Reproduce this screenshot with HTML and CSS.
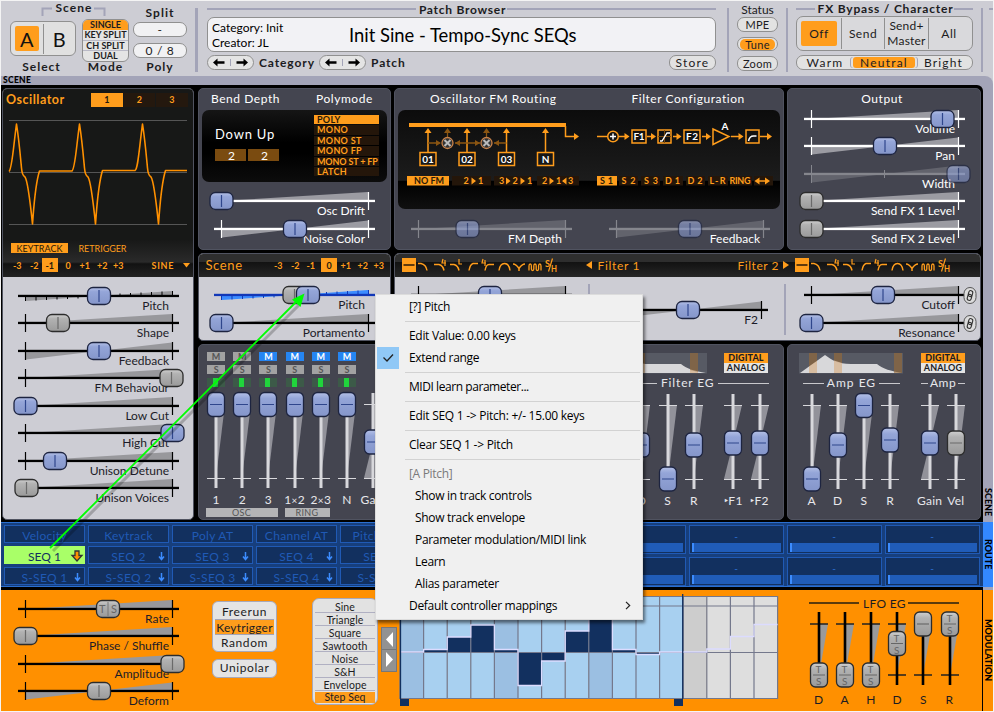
FILE: index.html
```html
<!DOCTYPE html>
<html lang="en">
<head>
<meta charset="utf-8">
<title>Synth</title>
<link rel="stylesheet" href="styles.css">
</head>
<body>
<div class="app">
  <header class="top">
    <div class="scene-main">
      <svg class="scene-title" width="119" height="17"><path d="M32.500 15V7.500H42M84 7.500H94.500V15" class="bracket"/><text x="45.500" y="11" textLength="36" class="cap">Scene</text></svg>
      <div class="row">
        <div class="select-col">
          <div class="ab"><span class="ab-btn on">A</span><i></i><span class="ab-btn">B</span></div>
          <div class="hlabel">Select</div>
        </div>
        <div class="mode-col">
          <div class="mode"><span class="on">SINGLE</span><span>KEY SPLIT</span><span>CH SPLIT</span><span>DUAL</span></div>
          <div class="hlabel">Mode</div>
        </div>
      </div>
    </div>
    <div class="split-col">
      <div class="hlabel">Split</div>
      <div class="pill light">-</div>
      <div class="pill light poly">0 / 8</div>
      <div class="hlabel">Poly</div>
    </div>
    <div class="vbar"></div>
    <div class="patch">
      <div class="ruled"><span>Patch Browser</span></div>
      <div class="patch-box">
        <div class="patch-meta">Category: Init<br>Creator: JL</div>
        <div class="patch-name">Init Sine - Tempo-Sync SEQs</div>
      </div>
      <div class="patch-nav">
        <svg class="nav" width="47" height="15" data-nav></svg><span class="cat">Category</span>
        <svg class="nav" width="47" height="15" data-nav></svg><span class="pat">Patch</span>
        <div class="pill store">Store</div>
      </div>
    </div>
    <div class="vbar v2"></div>
    <div class="status">
      <div class="stitle">Status</div>
      <div class="pill">MPE</div>
      <div class="pill tune"><span>Tune</span></div>
      <div class="pill">Zoom</div>
    </div>
    <div class="vbar v3"></div>
    <div class="fx">
      <div class="ruled"><span>FX Bypass / Character</span></div>
      <div class="fx-box"><span class="off"><b>Off</b></span><span>Send</span><span>Send+<br>Master</span><span>All</span></div>
      <div class="pill char"><span>Warm</span><span class="on">Neutral</span><span>Bright</span></div>
    </div>
    <div class="vbar v4"></div>
    <div class="stub"></div>
  </header>

  <div class="strip">SCENE</div>

  <div class="lower">
    <div class="work">
      <main class="main">
        <section class="panel osc">
          <div class="osc-dark">
            <div class="osc-head"><span class="osc-title">Oscillator</span><div class="tabs"><span class="on">1</span><span>2</span><span>3</span></div></div>
            <svg class="wave" width="178" height="107" viewBox="9 119 178 107">
              <path d="M9 120.500H187M9 172.500H187M9 224.500H187" stroke="#555" fill="none"/>
              <path class="wl" d="M9 171.500C12 169 13 150 16.500 124C19 140 20 152 21.500 168C22 174 23 176 25 177C28 181 30 200 32.500 224C34 205 35 185 39.500 171H72C75 169 76 150 79.500 124C82 140 83 152 84.500 168C85 174 86 176 88 177C91 181 93 200 95.500 224C97 205 98 185 102.500 170.500H135C138 169 139 150 142.500 124C145 140 146 152 147.500 168C148 174 149 176 151 177C154 181 156 200 158.500 224C160 205 161 185 165.500 170.500H187"/>
            </svg>
            <svg width="190" height="38" viewBox="3 240 190 38" class="disp">
              <rect x="11" y="243" width="57" height="10" class="or"/>
              <text x="16.500" y="251.500" textLength="46" class="t9 dk">KEYTRACK</text><text x="78.500" y="251.500" textLength="48" class="t9">RETRIGGER</text>
              <rect x="42" y="258" width="16" height="14" class="or"/>
              <g class="t9 b"><text x="13" y="268.500">-3</text><text x="30" y="268.500">-2</text><text x="45.500" y="268.500" class="dk">-1</text><text x="65.500" y="268.500">0</text><text x="79.500" y="268.500">+1</text><text x="97" y="268.500">+2</text><text x="113" y="268.500">+3</text><text x="151.500" y="268.500" textLength="22">SINE</text></g>
              <path d="M183 263h7l-3.500 4.500z" class="or"/>
            </svg>
          </div>
          <div class="sliders oscs">
            <div data-hs="73.500" data-type="step" data-label="Pitch"></div>
            <div data-hs="32.500" data-gray="1" data-label="Shape"></div>
            <div data-hs="73.500" data-type="bi" data-label="Feedback"></div>
            <div data-hs="146" data-gray="1" data-label="FM Behaviour"></div>
            <div data-hs="0" data-label="Low Cut"></div>
            <div data-hs="147" data-label="High Cut"></div>
            <div data-hs="29.500" data-label="Unison Detune"></div>
            <div data-hs="1" data-gray="1" data-label="Unison Voices"></div>
          </div>
        </section>

        <section class="panel slate bend">
          <div class="titles"><span>Bend Depth</span><span class="pm">Polymode</span></div>
          <div class="screen bend-screen">
            <div class="bend-l"><div class="du">Down Up</div><div class="nums"><span>2</span><span>2</span></div></div>
            <div class="plist"><span class="on">POLY</span><span>MONO</span><span>MONO ST</span><span>MONO FP</span><span class="wide">MONO ST + FP</span><span>LATCH</span></div>
          </div>
          <div class="sliders white two"><div data-hs="0" data-label="Osc Drift"></div><div data-hs="73.500" data-type="bi" data-label="Noise Color"></div></div>
        </section>

        <section class="panel slate routing">
          <div class="titles"><span>Oscillator FM Routing</span><span class="fc">Filter Configuration</span></div>
          <div class="screen route-screen">
            <svg width="382" height="99" viewBox="398 110 382 99" class="disp" id="routing"></svg>
          </div>
          <div class="sliders white dim pair"><div data-hs="49" data-label="FM Depth"></div><div data-hs="73.500" data-type="bi" data-label="Feedback"></div></div>
        </section>

        <section class="panel slate output">
          <div class="titles"><span>Output</span></div>
          <div class="sliders white">
            <div data-hs="131" data-label="Volume"></div>
            <div data-hs="73.500" data-type="bi" data-label="Pan"></div>
            <div data-hs="147" data-type="bi" data-mid="1" data-label="Width" class="dimmed"></div>
            <div data-hs="0" data-gray="1" data-label="Send FX 1 Level"></div>
            <div data-hs="0" data-gray="1" data-label="Send FX 2 Level"></div>
          </div>
        </section>

        <section class="panel lightp scenep">
          <svg width="191" height="23" viewBox="199 254 191 23" class="disp hd">
            <text x="205.500" y="270" textLength="36.500" class="t13">Scene</text>
            <rect x="321" y="258" width="16" height="14" class="or"/>
            <g class="t9 b"><text x="274" y="268.500">-3</text><text x="291" y="268.500">-2</text><text x="306.500" y="268.500">-1</text><text x="326.500" y="268.500" class="dk">0</text><text x="340.500" y="268.500">+1</text><text x="357.500" y="268.500">+2</text><text x="373.500" y="268.500">+3</text></g>
          </svg>
          <div class="sliders"><div data-hs="86.500" data-type="blue" data-label="Pitch"></div><div data-hs="0" data-label="Portamento"></div></div>
        </section>

        <section class="panel lightp filters">
          <svg width="585" height="23" viewBox="395 254 585 23" class="disp hd" id="filterhead"></svg>
          <div class="filter-row">
            <div class="sliders f1"><div data-hs="71.500" data-label="Cutoff"></div><div data-hs="0" data-label="Resonance"></div></div>
            <div class="fdiv"></div>
            <div class="sliders f2"><div data-hs="73.500" data-type="bi" data-label="F2"></div></div>
            <div class="fdiv d2"></div>
            <div class="sliders f3"><div data-hs="71.500" data-label="Cutoff"></div><div data-hs="0" data-label="Resonance"></div></div>
            <div class="links"><svg width="14" height="18" data-link></svg><svg width="14" height="18" data-link></svg></div>
          </div>
        </section>

        <section class="panel slate mixer">
          <div class="mix-row" id="mixer"></div>
          <div class="brackets"><span class="oscb">OSC</span><span class="ringb">RING</span></div>
        </section>

        <section class="panel slate egf">
          <div class="eg-top"><svg width="104" height="21" data-eg="f"></svg><div class="da"><b>DIGITAL</b><span>ANALOG</span></div></div>
          <div class="eg-titles"><div class="ruledw"><span>Filter EG</span></div></div>
          <div class="vrow">
            <div data-vs="478" data-label="A"></div><div data-vs="444" data-label="D"></div><div data-vs="478" data-label="S"></div><div data-vs="444" data-label="R"></div>
            <div class="gapv" data-vs="442" data-type="bi" data-label="‣F1"></div><div data-vs="442" data-type="bi" data-label="‣F2"></div>
          </div>
        </section>

        <section class="panel slate ega">
          <div class="eg-top"><svg width="104" height="21" data-eg="a"></svg><div class="da"><b>DIGITAL</b><span>ANALOG</span></div></div>
          <div class="eg-titles"><div class="ruledw"><span>Amp EG</span></div><div class="ruledw amp"><span>Amp</span></div></div>
          <div class="vrow">
            <div data-vs="478" data-label="A"></div><div data-vs="444" data-label="D"></div><div data-vs="404.500" data-label="S"></div><div data-vs="439" data-label="R"></div>
            <div class="gapv" data-vs="442" data-type="bi" data-label="Gain"></div><div data-vs="442" data-gray="1" data-label="Vel"></div>
          </div>
        </section>
      </main>

      <section class="route">
        <div class="sources" id="sources"></div>
        <div class="macros" id="macros"></div>
      </section>

      <section class="lfo">
        <div class="sliders"><div data-hs="82.500" data-gray="1" data-ts="1" data-label="Rate"></div><div data-hs="0" data-gray="1" data-label="Phase / Shuffle"></div><div data-hs="147" data-gray="1" data-label="Amplitude"></div><div data-hs="73.500" data-type="bi" data-gray="1" data-label="Deform"></div></div>
        <div class="trig">
          <div class="btns"><span>Freerun</span><span class="on">Keytrigger</span><span>Random</span></div>
          <div class="btns uni"><span>Unipolar</span></div>
        </div>
        <div class="shapes"><span>Sine</span><span>Triangle</span><span>Square</span><span>Sawtooth</span><span>Noise</span><span>S&amp;H</span><span>Envelope</span><span class="on">Step Seq</span></div>
        <svg class="shift" width="16" height="45"><rect width="16" height="45" fill="#777"/><rect x="1" y="1" width="14" height="43" fill="#929292"/><path d="M1 22.500h14" stroke="#777"/><path d="M12 5v15L5 12.500zM5 25v15l7-7.500z" fill="#fff"/></svg>
        <svg class="stepseq" width="380" height="114" viewBox="399 593 380 114" id="seq"></svg>
        <div class="lfoeg">
          <div class="ruledk"><span>LFO EG</span></div>
          <div class="krow">
            <div data-ks="675" data-label="D"></div><div data-ks="675" data-label="A"></div><div data-ks="675" data-label="H"></div><div data-ks="643.500" data-label="D"></div><div data-ks="624" data-plain="1" data-label="S"></div><div data-ks="624" data-label="R"></div>
          </div>
        </div>
      </section>
    </div>
    <aside class="side"><span class="s1">SCENE</span><span class="s2">ROUTE</span><span class="s3">MODULATION</span></aside>
  </div>

  <nav class="menu">
    <div class="item">[?] Pitch</div><hr>
    <div class="item">Edit Value: 0.00 keys</div>
    <div class="item checked"><svg width="22" height="22"><path d="M6.500 10.500l3.500 3.500 6-6.500" fill="none" stroke="#222" stroke-width="1.300"/></svg>Extend range</div><hr>
    <div class="item midi">MIDI learn parameter...</div><hr>
    <div class="item edit">Edit SEQ 1 -&gt; Pitch: +/- 15.00 keys</div><hr>
    <div class="item edit">Clear SEQ 1 -&gt; Pitch</div><hr>
    <div class="item off">[A Pitch]</div>
    <div class="item sub">Show in track controls</div>
    <div class="item sub">Show track envelope</div>
    <div class="item sub">Parameter modulation/MIDI link</div>
    <div class="item sub">Learn</div>
    <div class="item sub">Alias parameter</div>
    <div class="item more">Default controller mappings<svg width="6" height="9"><path d="M1 .8l3.700 3.700L1 8.200" fill="none" stroke="#222" stroke-width="1.200"/></svg></div>
  </nav>
  <svg class="arrow" width="300" height="270" viewBox="20 290 300 270">
    <path d="M53 551L300 304" stroke="#000" stroke-opacity=".22" stroke-width="3"/>
    <path d="M50 548L296 302" stroke="#00ff00" stroke-width="1.800"/>
    <path d="M304.500 293.500L292 299.500L300.500 307z" fill="#00ff00"/>
  </svg>
</div>
<script src="script.js"></script>
</body>
</html>
```
FILE: styles.css
```css
* { box-sizing: border-box; }
body { margin: 0; background: #f4f4f4; font-family: Lato, "Liberation Sans", sans-serif; color: #1c1c22; overflow: hidden; }
svg { display: block; overflow: visible; flex: none; }
svg text { font-family: Lato, "Liberation Sans", sans-serif; }
.app { position: relative; width: 992px; height: 710px; margin: 1px; background: #cdcdd4; display: flex; flex-direction: column; }
.row { display: flex; }

/* header */
.top { display: flex; height: 75px; flex: none; padding-left: 9px; }
.bracket { fill: none; stroke: #a3a4b8; stroke-width: 2; }
.cap { font-size: 12px; font-weight: 700; fill: #1c1c22; }
.hlabel { font-size: 12px; font-weight: 700; letter-spacing: 1px; line-height: 14px; text-align: center; white-space: nowrap; }
.scene-main { width: 119px; }
.select-col { width: 66px; margin-right: 6px; }
.ab { margin-top: 3px; height: 35px; border: 1px solid #909090; border-radius: 6px; background: #e0e0e0; display: flex; padding: 4px; align-items: center; }
.ab-btn { width: 24px; height: 25px; line-height: 26px; text-align: center; font-size: 20px; border-radius: 2px; color: #111; }
.ab-btn.on { background: #ff9d1c; }
.ab i { width: 1px; height: 30px; background: #909090; margin: 0 4px; }
.select-col .hlabel { margin-top: 4px; text-indent: -3px; }
.mode-col { width: 47px; }
.mode { height: 43px; margin-top: 1px; border: 1px solid #909090; border-radius: 6px; overflow: hidden; background: #e4e4e4; display: flex; flex-direction: column; }
.mode span { height: 10.300px; line-height: 10px; font-size: 9px; font-weight: 700; text-align: center; white-space: nowrap; border-bottom: 1px solid #b9b9c6; }
.mode .on { background: #ff9d1c; border: 0; }
.mode span:last-child { border: 0; }
.mode-col .hlabel { margin-top: -2px; }
.split-col { width: 54px; margin-left: 4px; padding-top: 5px; }
.pill { height: 15px; border: 1px solid #909090; border-radius: 7px; background: #e2e2e2; font-size: 11px; line-height: 13px; text-align: center; letter-spacing: .7px; }
.pill.light { background: #f1f1f3; margin-top: 2px; font-size: 12px; }
.pill.poly { margin-top: 6px; }
.split-col .hlabel:last-child { margin-top: 2px; }
.vbar { width: 3px; height: 64px; margin: 7px 9px 0 8px; background: #a3a4b8; flex: none; }
.patch { width: 509px; flex: none; }
.ruled { display: flex; align-items: center; height: 16px; font-size: 12px; font-weight: 700; letter-spacing: .73px; line-height: 15px; white-space: nowrap; }
.ruled::before, .ruled::after { content: ""; height: 2px; background: #a3a4b8; flex: 1; }
.ruled span { margin: 0 1px; }
.patch .ruled span { margin-left: 3px; }
.patch-box { height: 35px; border: 1px solid #909090; border-radius: 7px; background: #f2f2f5; display: flex; align-items: center; }
.patch-meta { font-size: 12px; line-height: 15px; margin-left: 4px; width: 137px; color: #000; }
.patch-name { font-size: 18.400px; color: #000; white-space: nowrap; }
.patch-nav { display: flex; margin-top: 3px; font-size: 12px; font-weight: 700; letter-spacing: .9px; line-height: 16px; }
.cat { width: 60px; margin-left: 5px; }
.pat { margin-left: 5px; }
.store { margin-left: auto; width: 47px; font-weight: 400; letter-spacing: 1.200px; font-size: 12px; }
.v2 { margin: 7px 8px 0 11px; width: 2px; }
.status { width: 41px; flex: none; }
.stitle { font-size: 12px; line-height: 16px; height: 16px; padding-top: 1px; text-align: center; }
.status .pill { margin-bottom: 5px; height: 14.500px; letter-spacing: .3px; }
.tune { padding: 1px 2px; }
.tune span { display: block; height: 11px; line-height: 11px; background: #ff9d1c; border-radius: 5px; }
.v3 { margin: 7px 8px 0 8px; width: 2px; }
.fx { width: 177px; flex: none; }
.fx .ruled { height: 15px; letter-spacing: .8px; }
.fx .ruled span { margin-left: 3px; }
.fx-box { height: 35px; border: 1px solid #909090; border-radius: 7px; background: #d9d9dc; display: grid; grid-template-columns: 44px 43px 44px 44px; font-size: 12px; text-align: center; letter-spacing: .5px; padding-right: 2px; }
.fx-box span { height: 31px; margin-top: 1px; border-left: 1px solid #909090; line-height: 31px; }
.fx-box span:last-child { margin-right: 3px; }
.fx-box span:nth-child(3) { line-height: 15px; letter-spacing: .2px; }
.fx-box .off { border: 0; padding: 3px 4px; }
.off b { display: block; height: 25px; line-height: 25px; font-weight: 400; background: #ff9d1c; border-radius: 2px; }
.char { margin-top: 4px; display: grid; grid-template-columns: 56px 62px 57px; font-size: 12px; letter-spacing: 1.200px; padding-top: 1px; line-height: 12px; }
.char .on { background: #ff9d1c; border-radius: 3px; height: 11px; line-height: 11px; box-shadow: -2px 0 #e2e2e2, -3px 0 #a3a4b8, 2px 0 #e2e2e2, 3px 0 #a3a4b8; }
.v4 { margin: 7px 6px 0 8px; width: 2px; }
.stub { width: 4px; height: 2px; margin-top: 7px; background: #a3a4b8; }
.strip { height: 9px; flex: none; background: #a3a4b8; border-radius: 0 8px 0 0; font-size: 8.500px; font-weight: 900; line-height: 9px; letter-spacing: .3px; padding-left: 2px; color: #000; }

/* body */
.lower { display: flex; flex: 1; min-height: 0; background: #a3a4b8; }
.work { width: 982px; background: #000; border-radius: 0 6px 0 0; display: flex; flex-direction: column; }
.side { width: 10px; display: flex; flex-direction: column; font-size: 9px; font-weight: 900; color: #000; }
.side span { writing-mode: vertical-rl; line-height: 10px; text-align: center; width: 10px; }
.side .s1 { height: 435px; padding-top: 403px; text-align: left; }
.s2 { margin-top: 2px; height: 65px; background: #3388ff; }
.s3 { margin-top: 3px; flex: 1; background: #ff9000; }
.main { display: grid; grid-template-columns: 193px 193px 390px 194px; grid-template-rows: 162px 88px 176px; gap: 3px; padding: 3px 0 0 1px; height: 437px; flex: none; }
.panel { border-radius: 5px; overflow: hidden; border: 1px solid #505360; }
.slate { background: #444550; }
.osc { grid-row: 1 / 4; margin-right: 1px; background: #cdcdd4; height: 432px; }
.osc-dark { height: 188px; background: linear-gradient(#171817 0 80%, #2a2a2a 92%, #121212 93%, #222); overflow: hidden; }
.osc-head { display: flex; height: 30px; padding: 4px 0 0 3px; }
.osc-title { font-size: 12.500px; font-weight: 700; color: #ff9d1c; line-height: 14px; letter-spacing: .5px; width: 85px; }
.tabs { display: flex; gap: 1px; height: 14px; }
.tabs span { width: 31.600px; background: #24180e; color: #ff9d1c; font-size: 9px; font-weight: 700; line-height: 14px; text-align: center; }
.tabs .on { background: #ff9d1c; color: #24180e; }
.wave { margin-left: 6px; }
.wl { fill: none; stroke: #ff9000; stroke-width: 1.600; stroke-linejoin: round; }
.osc-dark .disp { margin-top: 14px; }
.disp text { fill: #ff9d1c; }
.disp .t9, .disp .t9 text { font-size: 9px; }
.disp .b, .disp .b text { font-weight: 700; }
.disp .t13 { font-size: 13px; }
.disp .w { fill: #fff; font-size: 10px; font-weight: 700; }
.disp .dk, .disp .b .dk { fill: #2a1a08; }
.or { fill: #ff9d1c; }
.cell { fill: #24160a; }
.ln { fill: none; stroke: #ff9d1c; stroke-width: 1.500; }
.lnd { fill: none; stroke: #8a5512; stroke-width: 1.300; }

.sliders { padding: 8px 0 0 5px; }
.sliders > div { height: 27.500px; width: 181px; }
.sliders.oscs { padding-top: 8.500px; }
.sl-label { font-size: 12px; text-anchor: end; }
.titles { height: 21px; display: flex; color: #fff; font-size: 12px; letter-spacing: .55px; line-height: 20px; padding-left: 12px; white-space: nowrap; }
.titles .pm { margin-left: 36px; }
.routing .titles { padding-left: 35px; }
.titles .fc { margin-left: 75px; }
.output .titles { justify-content: center; padding: 0 4px 0 0; }
.output .sliders { padding-left: 6px; padding-top: 0; margin-top: -1.500px; }
.screen { margin: 0 3px; border-radius: 7px; }
.bend-screen { height: 72px; background: linear-gradient(#151515, #000 45%, #000 60%, #0c0c0c); display: flex; }
.bend-l { width: 112px; padding: 15px 0 0 13px; }
.du { color: #fff; font-size: 13px; letter-spacing: .8px; line-height: 18px; }
.nums { display: flex; gap: 2px; margin-top: 6px; }
.nums span { width: 31px; height: 12px; background: #7a4b10; color: #fff; font-size: 12px; line-height: 13px; text-align: center; padding-left: 2px; }
.plist { width: 65px; padding-top: 5px; font-size: 9px; font-weight: 700; color: #ff9d1c; }
.plist span { display: block; height: 9.400px; margin-bottom: 1px; line-height: 9.500px; background: #24160a; padding-left: 3px; white-space: nowrap; letter-spacing: .3px; }
.plist .wide { letter-spacing: -.15px; }
.plist .on { background: #ff9d1c; color: #2a1a08; }
.sliders.two { padding-top: 9.400px; }
.route-screen { height: 99px; background: linear-gradient(#0c0c0c, #1c1c1c 71%, #000 72%, #101010); }
.pair { display: flex; padding: 10px 0 0 6px; gap: 17px; }
.pair > div { flex: none; }
.lightp { background: #cdcdd4; }
.hd { background: linear-gradient(#2e2e2e 0 35%, #121212 36%, #262626); }
.scenep .sliders { padding-top: 8px; }
.filters { grid-column: 3 / 5; }
.filter-row { display: flex; }
.filter-row > div { flex: none; }
.filter-row .sliders { padding: 8px 0 0 0; width: 181px; }
.filter-row .f1 { margin-left: 6px; }
.fdiv { width: 2px; height: 51px; margin: 7px 0 0 6px; background: #a3a4b8; }
.filter-row .f2 { padding-top: 23px; margin-left: 7px; }
.fdiv.d2 { margin-left: 6px; }
.filter-row .f3 { margin-left: 8px; margin-right: -12px; }
.links { padding-top: 10px; display: flex; flex-direction: column; gap: 10px; }

.mix-row { display: flex; padding: 7px 0 0 4px; height: 162px; }
.mx { width: 26.200px; flex: none; display: flex; flex-direction: column; align-items: center; }
.mx b { display: block; width: 18px; height: 9px; margin-bottom: 4px; background: #a2a2a2; color: #555; font-size: 9px; font-weight: 700; line-height: 9.500px; text-align: center; }
.mx b.on { background: #2585f2; color: #fff; }
.mx i { display: block; width: 18px; height: 9px; background: linear-gradient(90deg, #3c5a48 0 6px, #20d43c 6px 11px, #3c5a48 11px); margin-bottom: 5px; }
.mx.gain { padding-top: 40px; }
.vl { color: #e8e8ec; font-size: 12px; line-height: 14px; text-align: center; white-space: nowrap; letter-spacing: .3px; margin-top: 4px; }
.brackets { display: flex; gap: 7px; padding-left: 6.500px; font-size: 9px; letter-spacing: .3px; color: #555; line-height: 10px; text-align: center; margin-top: 1px; }
.brackets span { background: #b4b4b6; height: 9px; }
.oscb { width: 72px; } .ringb { width: 45px; }
.eg-top { display: flex; padding: 8px 15px 0 11px; justify-content: space-between; }
.egf .eg-top { padding-left: 207px; padding-right: 15px; }
.da { width: 44px; height: 20px; font-size: 9px; font-weight: 700; text-align: center; line-height: 10.500px; background: #e4e4e4; color: #1c1c22; letter-spacing: .1px; }
.da b { display: block; height: 10px; background: #ff9d1c; }
.da span { display: block; }
.eg-titles { display: flex; justify-content: space-between; padding: 0 15px; height: 19px; }
.egf .eg-titles { padding-left: 8px; padding-right: 14px; }
.ruledw { display: flex; align-items: center; gap: 3px; color: #e8e8ec; font-size: 12px; letter-spacing: 1px; width: 97px; line-height: 16px; height: 18px; }
.ruledw.amp { width: 44px; gap: 2px; letter-spacing: .5px; }
.ruledw::before, .ruledw::after { content: ""; flex: 1; height: 1px; background: #c8c8cc; }
.egf .ruledw { width: auto; flex: 1; gap: 4px; letter-spacing: .85px; }
.egf .ruledw::before { flex: 0 0 254px; }
.vrow { display: flex; padding-left: 10.500px; }
.egf .vrow { padding-left: 207.200px; }
.vrow > div { width: 26.200px; flex: none; display: flex; flex-direction: column; align-items: center; }
.vrow .gapv { margin-left: 13.300px; }

/* modulation routing */
.route { height: 65px; flex: none; background: #173f7d; border-top: 1px solid #2b6fd0; border-bottom: 1px solid #2b6fd0; display: flex; padding: 2px 0 0 3px; }
.sources { display: grid; grid-template-columns: repeat(7, 81px); grid-auto-rows: 18px; gap: 3px; width: 586.500px; flex: none; overflow: hidden; height: 61px; }
.src { background: #12305f; border: 1px solid #205ab5; color: #205ab5; font-size: 12px; line-height: 19px; text-align: center; letter-spacing: .3px; position: relative; white-space: nowrap; }
.src svg { position: absolute; right: 3px; top: 4px; }
.src.on { background: #a9ff68; border-color: #a9ff68; color: #12305f; letter-spacing: 0; }
.src.on svg { right: 1px; top: 3px; }
.macros { display: grid; grid-template-columns: repeat(4, 95px); grid-auto-rows: 29px; gap: 3px; width: 390px; }
.mac { background: #12305f; border: 1px solid #205ab5; color: #2f72d8; font-size: 10px; text-align: center; line-height: 20px; padding: 0 2px; }
.mac i { display: block; height: 9px; margin-top: -3px; background: #205cb8; border-left: 2px solid #3c8cff; }

/* LFO */
.lfo { margin-top: 3px; flex: 1; background: #ff9000; display: flex; align-items: flex-start; width: 981px; }
.lfo .sliders { padding: 8.500px 0 0 7px; width: 211px; flex: none; }
.trig { width: 65px; padding-top: 11px; margin-right: 1px; }
.btns { border: 1px solid #a8a8b8; border-radius: 6px; background: #e4e4e4; height: 51px; padding: 2px 2px; font-size: 12px; letter-spacing: .6px; text-align: center; }
.btns span { display: block; height: 15.500px; line-height: 15px; border-bottom: 1px solid #a3a4b8; white-space: nowrap; }
.btns .on { background: #ff9d1c; letter-spacing: .2px; }
.btns span:last-child { border: 0; line-height: 16px; }
.uni { height: 19px; margin-top: 7px; padding-top: 0; }
.shapes { margin: 8px 0 0 34px; width: 66px; height: 107px; border: 1px solid #a8a8b8; border-radius: 7px; background: #e2e2e2; padding: 1px 2px; font-size: 10.500px; letter-spacing: .1px; text-align: center; }
.shapes span { display: block; height: 13px; line-height: 14px; border-bottom: 1px solid #b0b0c2; }
.shapes .on { background: #ff9d1c; height: 11px; line-height: 11px; border: 0; margin-top: 1px; }
.shift { margin: 37px 0 0 3px; }
.stepseq { margin: 3px 0 0 2px; }
.lfoeg { margin-left: 26.500px; padding-top: 5px; }
.ruledk { display: flex; align-items: center; width: 150px; margin-left: 3px; height: 16px; font-size: 12px; letter-spacing: .3px; }
.ruledk span { margin: 0 2px 0 4px; }
.ruledk::before, .ruledk::after { content: ""; height: 2px; flex: 1; background: #5a3a0c; }
.krow { display: flex; }
.krow > div { width: 26.200px; flex: none; display: flex; flex-direction: column; align-items: center; }
.krow .vl { color: #1c1c22; margin-top: 5.500px; }

/* overlays */
.menu { position: absolute; left: 374px; top: 293px; width: 268px; height: 326px; background: #f0f0f0; border: 1px solid #dcdcdc; padding-top: 1px; box-shadow: 2px 3px 3px rgba(0,0,0,.5); font-family: "Open Sans", "Noto Sans", sans-serif; font-size: 12px; color: #000; letter-spacing: -.31px; }
.item { height: 22px; line-height: 22px; padding-left: 33px; white-space: nowrap; display: flex; }
.item.midi { letter-spacing: -.44px; }
.item.edit { letter-spacing: -.26px; }
.item.sub { padding-left: 39px; }
.item.off { color: #7a7a7a; }
.item.checked { padding-left: 1px; }
.checked svg { background: #90c8f6; margin-right: 10px; }
.more svg { margin: 6px 11px 0 auto; }
.menu hr { border: 0; height: 1px; background: #d2d2d2; margin: 3px 2px 3px 29px; }
.arrow { position: absolute; left: 19px; top: 289px; pointer-events: none; }
```
FILE: script.js
```js
const all = (s, f) => document.querySelectorAll(s).forEach(f);
const SVG = (w, h, body, extra = '') => `<svg width="${w}" height="${h}" ${extra}>${body}</svg>`;

document.body.insertAdjacentHTML('afterbegin', `<svg width="0" height="0" style="position:absolute"><defs>
<linearGradient id="gb" x2="0" y2="1"><stop offset="0" stop-color="#b4c0e6"/><stop offset=".25" stop-color="#94a5d8"/><stop offset="1" stop-color="#8596ca"/></linearGradient>
<linearGradient id="gg" x2="0" y2="1"><stop offset="0" stop-color="#d0d0d0"/><stop offset=".25" stop-color="#b2b2b2"/><stop offset="1" stop-color="#9a9a9a"/></linearGradient></defs></svg>`);

function hHandle(x, y, gray, ts) {
  const mark = ts
    ? `<text x="${x - 9}" y="${y + 4}" font-size="11" fill="#666">T</text><text x="${x + 3}" y="${y + 4}" font-size="11" fill="#666">S</text><path d="M${x} ${y - 7}v14" stroke="#777"/>`
    : `<path d="M${x} ${y - 6}v12" stroke="${gray ? '#6a6a6a' : '#2f468c'}" stroke-width="1.2"/>`;
  return `<rect x="${x - 11.5}" y="${y - 8.5}" width="23" height="17" rx="5.5" fill="url(#${gray ? 'gg' : 'gb'})" stroke="${gray ? '#2c2c2c' : '#1d2440'}" stroke-width="1.3"/>${mark}`;
}
function vHandle(x, y, gray, ts) {
  const mark = ts
    ? `<text x="${x - 3.5}" y="${y - 2}" font-size="10" fill="#666">T</text><text x="${x - 3}" y="${y + 10}" font-size="10" fill="#666">S</text><path d="M${x - 6} ${y}h12" stroke="#666"/>`
    : `<path d="M${x - 6} ${y}h12" stroke="${gray ? '#6a6a6a' : '#2f468c'}" stroke-width="1.2"/>`;
  return `<rect x="${x - 8.5}" y="${y - 12}" width="17" height="24" rx="5" fill="url(#${gray ? 'gg' : 'gb'})" stroke="${gray ? '#2c2c2c' : '#1d2440'}" stroke-width="1.3"/>${mark}`;
}

all('[data-hs]', el => {
  const d = el.dataset, white = !!el.closest('.white'), y = 10;
  const dim = el.closest('.dim') || el.classList.contains('dimmed');
  const c = white ? '#fff' : '#000', lab = white ? '#fff' : '#1c1c28';
  let w, ticks = `<path d="M17.5 ${y - 9}v18M164.500 ${y - 9}v18" stroke="${c}" stroke-width="1.2" fill="none"/>`;
  if (d.mid) ticks = `<path d="M17.500 ${y - 9}v18M90.500 ${y - 4}v8" stroke="${c}"/>`;
  const wc = d.type === 'blue' ? '#3c8cff' : (white ? '#9b9ba2' : '#98989c');
  if (d.type === 'bi' || d.type === 'step' || d.type === 'blue') {
    const a = d.type === 'bi' ? 8.5 : 5;
    w = `<path d="M18 ${y}V${y + a}L91 ${y}L164 ${y - a}V${y}z" fill="${wc}"/>`;
  } else w = `<path d="M18 ${y}L164 ${y - 9}V${y}z" fill="${wc}"/>`;
  let line = c;
  if (d.type === 'step' || d.type === 'blue') {
    line = d.type === 'blue' ? '#1238b8' : '#000';
    ticks = '';
    for (let i = 0; i < 7; i++) ticks += `<path d="M${17.5 + i * 10.5} ${y}v${5 - i * .5}M${164.5 - i * 10.5} ${y}v${-5 + i * .5}" stroke="${line}"/>`;
  }
  const g = w + ticks + `<rect x="10" y="${y - 1.2}" width="161" height="2.300" fill="${line}"/>`;
  let h = '';
  if (d.type === 'blue') h += hHandle(90.5, y, true);
  h += hHandle(17.5 + +d.hs, y, !!d.gray, d.ts);
  const text = `<text class="sl-label" x="161" y="${y + 13.5}" fill="${lab}">${d.label}</text>`;
  el.innerHTML = SVG(181, 27, `<g opacity="${dim ? .35 : 1}">${g}</g>${text}<g opacity="${dim ? .6 : 1}">${h}</g>`);
});

const vslider = (y, type, gray) => {
  const v = y - 392, x = 13;
  const w = type === 'bi' ? `M${x} 50L${x + 9} 12H${x}zM${x} 50L${x - 9} 86H${x}z` : `M${x} 86L${x + 9} 12H${x}z`;
  return SVG(26, 97, `<path d="${w}" fill="#92929a"/><path d="M4 12.500h18M4 86.500h18" stroke="#d8d8dc"/><rect x="11.500" y="1" width="3" height="95" fill="#d8d8dc"/>${vHandle(x, v, gray)}`);
};
all('[data-vs]', el => {
  const d = el.dataset;
  el.innerHTML = vslider(+d.vs, d.type, !!d.gray) + `<div class="vl">${d.label}</div>`;
});
all('[data-ks]', el => {
  const d = el.dataset, v = d.ks - 611;
  el.innerHTML = SVG(26, 76, `<path d="M13 64L22 13H13z" fill="#9a9a9a"/><path d="M4 13h18M4 64h18" stroke="#222" stroke-width="1.3"/><rect x="11.700" y="1" width="2.600" height="73" fill="#000"/>${vHandle(13, v, true, !d.plain)}`) + `<div class="vl">${d.label}</div>`;
});

document.getElementById('mixer').innerHTML = ['1', '2', '3', '1<small>×</small>2', '2<small>×</small>3', 'N'].map((l, i) =>
  `<div class="mx"><b class="${i > 1 ? 'on' : ''}">M</b><b>S</b><i></i>${vslider(404.5)}<div class="vl">${l}</div></div>`).join('') +
  `<div class="mx gain">${vslider(442, 'bi')}<div class="vl">Gain</div></div>`;

all('[data-nav]', s => {
  s.innerHTML = `<rect x=".5" y=".5" width="46" height="14" rx="7" fill="#e4e4e4" stroke="#909090"/><path d="M23.500 4v7" stroke="#a3a4b8"/>
  <path d="M6 7.500l4.500-4v2.800h7v2.400h-7v2.800zM41 7.500l-4.500-4v2.800h-7v2.400h7v2.800z" fill="#000"/>`;
});
all('[data-link]', s => {
  s.innerHTML = `<rect x="1" y=".5" width="12" height="16" rx="6" fill="#dcdcdc" stroke="#555"/><g fill="none" stroke="#333" stroke-width="1.1" transform="rotate(15 7 8.500)"><rect x="5" y="3.500" width="4" height="6" rx="2"/><rect x="5" y="7.500" width="4" height="6" rx="2"/></g>`;
});
all('[data-eg]', s => {
  s.innerHTML = s.dataset.eg === 'a'
    ? `<rect width="104" height="20.500" fill="#575a64"/><path d="M1 20L26 2C33 7 38 11 52 11H78C84 16 92 18 103 20z" fill="#d8d8da"/><path d="M10 0h8v20h-8zM35 0h8v20h-8zM95 0h8v20h-8z" fill="#9a6a35" fill-opacity=".6"/><path d="M10 13.500L18 8V20H10zM35 7.500L43 10V20H35z" fill="#e8cdb4" fill-opacity=".7"/>`
    : `<rect width="105" height="20.500" fill="#575a64"/><path d="M1 20L18 2C26 7 32 11 44 11H79C85 16 93 18 104 20z" fill="#d8d8da"/><path d="M35 0h8v20h-8zM88 0h8v20h-8z" fill="#9a6a35" fill-opacity=".6"/><path d="M88 17L96 19V20H88zM35 9L43 11V20H35z" fill="#e8cdb4" fill-opacity=".7"/>`;
});

const head = (x, y, cl = 'or') => `<path class="${cl}" d="M${x} ${y}l-5-3.500v7z"/>`;
const up = (x, y, f = '#ff9d1c') => `<path fill="${f}" d="M${x} ${y}l-3.500 5h7z"/>`;
let r = `<path class="or" d="M409 123H566V127H409z"/><path class="ln" d="M565.500 126V136.500H575"/>${head(579, 136.5)}`;
[428, 467, 506.5, 545.5].forEach((x, i) => {
  r += `<path class="ln" d="M${x} 152V131"/>${up(x, 128)}<rect class="ln" x="${x - 8}" y="152.500" width="16" height="13"/><text class="w" x="${x}" y="162.500" text-anchor="middle">${['01', '02', '03', 'N'][i]}</text>`;
});
r += `<path class="lnd" d="M428 143H440M455 143H480M494 143H506.500M447.500 137V132M486.500 137V132"/>` + up(447.5, 128, '#8a5512') + up(486.5, 128, '#8a5512');
[[441, 1], [480, 1], [455, -1], [494, -1]].forEach(([x, s]) => r += `<path fill="#8a5512" d="M${x} 143l${-5 * s}-3v6z"/>`);
[447.5, 486.5].forEach(x => r += `<circle cx="${x}" cy="143" r="5.500" fill="#333" stroke="#c8824a" stroke-width="1.300"/><path d="M${x - 3} 140l6 6m0-6l-6 6" stroke="#bbb" stroke-width="2"/>`);
r += `<rect class="or" x="407" y="176" width="42" height="9.500"/><path class="cell" d="M452 176h39v9.500h-39zM494 176h38v9.500h-38zM537 176h42v9.500h-42zM619 176h19v9.500h-19zM641 176h19v9.500h-19zM663 176h20v9.500h-20zM686 176h19v9.500h-19zM708 176h20v9.500h-20zM730 176h22v9.500h-22zM754 176h19v9.500h-19z"/><rect class="or" x="597" y="176" width="20" height="9.500"/>
<g class="t9 b"><text x="414" y="184" textLength="30" class="dk">NO FM</text><text x="463.500" y="184">2</text><text x="478" y="184">1</text><text x="499" y="184">3</text><text x="512.500" y="184">2</text><text x="527" y="184">1</text><text x="542" y="184">2</text><text x="556" y="184">1</text><text x="568" y="184">3</text>
<text x="600" y="184" class="dk" textLength="13">S 1</text><text x="621.500" y="184" textLength="14">S 2</text><text x="644" y="184" textLength="14">S 3</text><text x="665" y="184" textLength="15">D 1</text><text x="687.500" y="184" textLength="15">D 2</text><text x="709.500" y="184" textLength="16">L-R</text><text x="729.500" y="184" textLength="21">RING</text></g>
<path class="or" d="M471.500 177.500l4.500 3.500-4.500 3.500zM506 177.500l4.500 3.500-4.500 3.500zM520.500 177.500l4.500 3.500-4.500 3.500zM549.500 177.500l4.500 3.500-4.500 3.500zM566.500 177.500l-4.500 3.500 4.500 3.500z"/>
<path class="ln" d="M757 181H767"/><path class="or" d="M754.500 181l5-3.500v7zM770 181l-5-3.500v7z"/>`;
r += `<path class="ln" d="M597 136.500H607M619 136.500H626M647 136.500H653M673 136.500H678M702 136.500H708M731 136.500H739M760 136.500H768"/>` + [629.5, 656, 681.5, 711, 743.5, 772].map(x => head(x, 136.5)).join('') +
`<circle class="ln" cx="613" cy="136.500" r="5.300"/><path d="M610 136.500h6M613 133.500v6" stroke="#fff" stroke-width="1.500"/>
<rect class="ln" x="632" y="130" width="14" height="13"/><text class="w" x="633.500" y="140" textLength="11">F1</text>
<rect class="ln" x="658" y="130" width="13" height="13"/><path d="M658 136.500h13M664.500 130v13" stroke="#7a4b10"/><path d="M660 141h2l5-8h3" fill="none" stroke="#fff" stroke-width="1.300"/>
<rect class="ln" x="684" y="130" width="16" height="13"/><text class="w" x="686" y="140" textLength="12">F2</text>
<path class="ln" d="M713 129V144.500L729 136.500z"/><text class="w" x="721.500" y="130">A</text>
<rect class="ln" x="746" y="130" width="13" height="13"/><path d="M748.500 141q1-5 5-5h3" fill="none" stroke="#fff" stroke-width="1.500"/>`;
document.getElementById('routing').innerHTML = r;

const types = x => `<g transform="translate(${x} 258)"><rect width="14" height="14" class="or"/><path d="M1.500 7h11" stroke="#2a1a08" stroke-width="1.500"/>
<path class="ln" d="M16 5.500h3q5 1 6 7M32 6.500h5q4 1 5 6M48 6.500h4q4 1 5 6M67 12.500q1-6 4-7h5M83 12.500q1-6 4-6h5M97 12.500q1-7 5.500-7t5.500 7M111 6q3 0 6 4.500 3-4.500 6-4.500M117 10v3"/>
<path class="ln" style="stroke-width:1.300" d="M127 12.500V8q0-2 1.200-2t1.200 2v3q0 1.500 1.200 1.500t1.200-1.500V8q0-2 1.200-2t1.200 2v3q0 1.500 1.200 1.500t1.200-1.500V8q0-2 1.200-2t1.200 2v4.500"/>
<path class="ln" style="stroke-width:1.200" d="M41 1l-1 4h4M43 2v6M57 1v5h3M81 1l-1 4h4M83 2v6"/>
<text x="143" y="9" font-size="9" font-weight="700">S</text><path class="ln" style="stroke-width:1.200" d="M146.500 13.500l4-13"/><text x="149" y="14" font-size="9" font-weight="700" textLength="6" lengthAdjust="spacingAndGlyphs">H</text></g>`;
document.getElementById('filterhead').innerHTML = types(402) + types(795) +
  `<path class="or" d="M592 261v8l-6-4zM783 261v8l6-4z"/><text x="597.500" y="269.500" font-size="12" textLength="42">Filter 1</text><text x="737.500" y="269.500" font-size="12" textLength="41">Filter 2</text>`;

const rows = [['Velocity', 'Keytrack', 'Poly AT', 'Channel AT', 'Pitchbend', 'Modwheel', 'Breath'], 'SEQ ', 'S-SEQ '];
document.getElementById('sources').innerHTML = rows.map((row, k) => [0, 1, 2, 3, 4, 5, 6].map(i => {
  if (!k) return `<div class="src">${row[i]}</div>`;
  const on = k === 1 && i === 0;
  const icon = on ? SVG(12, 12, '<path d="M4 1h4v4.500h3L6 11 1 5.500h3z" fill="#ff9000" stroke="#333" stroke-width="1.3"/>') : SVG(7, 10, '<path d="M3.500 1v7M1 5.500l2.500 3 2.500-3" fill="none" stroke="#3c8cff" stroke-width="1.500"/>');
  return `<div class="src ${on ? 'on' : ''}">${row}${i + 1}${icon}</div>`;
}).join('')).join('');
document.getElementById('macros').innerHTML = '<div class="mac">-<i></i></div>'.repeat(8);

const W = 23.6, X0 = 400, Y0 = 652.5;
const vals = [652, 649.5, 637, 625, 649.5, 685.5, 661, 631, 610, 649.5, 654.5, 652, 652, 649, 636.5, 624.5];
let q = '', path = '';
vals.forEach((v, i) => {
  const x = X0 + i * W;
  q += `<rect x="${x}" y="596" width="${W}" height="103" fill="${i < 12 ? (i % 4 ? '#a8d0f0' : '#9bbfe2') : (i % 4 ? '#dedede' : '#cdcdcd')}"/>`;
  if (i > 0 && i < 11) q += `<rect x="${x}" y="${Math.min(v, Y0)}" width="${W}" height="${Math.abs(v - Y0)}" fill="#12305f"/>`;
  path += `${i ? 'L' : 'M'}${x} ${v}H${x + W}`;
});
for (let i = 0; i <= 16; i++) q += `<path d="M${X0 + i * W} 596V699" stroke="#74788c" stroke-width="1.200"/>`;
q += `<path d="M400 596.500H777.500M400 606H777.500M400 652.500H777.500M400 698.500H777.500" stroke="#74788c" stroke-width="1.200"/><path d="${path}" fill="none" stroke="#dcdcff" stroke-width="1.300"/>
<path d="M682.700 594V699M400.500 596V699" stroke="#12305f" stroke-width="1.300"/><path d="M400 699h9v7h-9zM674 699h9v7h-9z" fill="#12305f"/>`;
document.getElementById('seq').innerHTML = q;
```
